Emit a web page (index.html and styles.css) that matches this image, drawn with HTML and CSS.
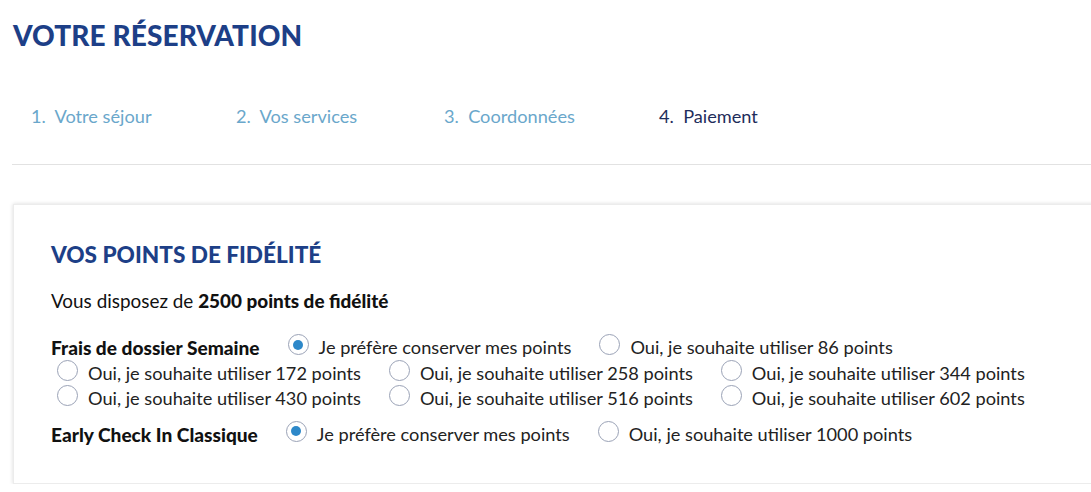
FILE: index.html
```html
<!DOCTYPE html>
<html lang="fr">
<head>
<meta charset="utf-8">
<title>Votre réservation</title>
<link rel="stylesheet" href="styles.css">
</head>
<body>
<div class="page">
  <h1 class="title">VOTRE RÉSERVATION</h1>
  <nav class="steps">
    <span class="step">1.&nbsp; Votre séjour</span>
    <span class="step">2.&nbsp; Vos services</span>
    <span class="step">3.&nbsp; Coordonnées</span>
    <span class="step current">4.&nbsp; Paiement</span>
  </nav>
  <hr class="divider">
  <section class="card">
    <h2 class="card-title">VOS POINTS DE FIDÉLITÉ</h2>
    <p class="balance">Vous disposez de <b>2500 points de fidélité</b></p>
    <div class="group">
      <span class="group-label">Frais de dossier Semaine</span>
      <label class="opt"><span class="radio checked"></span>Je préfère conserver mes points</label>
      <label class="opt"><span class="radio"></span>Oui, je souhaite utiliser 86 points</label>
      <label class="opt"><span class="radio"></span>Oui, je souhaite utiliser 172 points</label>
      <label class="opt"><span class="radio"></span>Oui, je souhaite utiliser 258 points</label>
      <label class="opt"><span class="radio"></span>Oui, je souhaite utiliser 344 points</label>
      <label class="opt"><span class="radio"></span>Oui, je souhaite utiliser 430 points</label>
      <label class="opt"><span class="radio"></span>Oui, je souhaite utiliser 516 points</label>
      <label class="opt"><span class="radio"></span>Oui, je souhaite utiliser 602 points</label>
    </div>
    <div class="group second">
      <span class="group-label">Early Check In Classique</span>
      <label class="opt"><span class="radio checked"></span>Je préfère conserver mes points</label>
      <label class="opt"><span class="radio"></span>Oui, je souhaite utiliser 1000 points</label>
    </div>
  </section>
</div>
</body>
</html>
```
FILE: styles.css
```css
html, body {
  margin: 0;
  padding: 0;
  background: #ffffff;
  overflow: hidden;
}
body {
  font-family: Lato, "Noto Sans", sans-serif;
  color: #111111;
}
.page {
  padding: 18px 0 0 12px;
  width: 1140px;
}
.title {
  margin: 0 0 0 1px;
  font-size: 28px;
  font-weight: 900;
  color: #1d3f87;
  line-height: 34px;
  letter-spacing: 0.1px;
}
.steps {
  display: flex;
  padding: 53px 0 0 19px;
  height: 59px;
}
.step {
  font-size: 18.2px;
  color: #6aa7cb;
  line-height: 22px;
}
.step:nth-child(1) { width: 205px; }
.step:nth-child(2) { width: 208px; }
.step:nth-child(3) { width: 215px; }
.step.current { color: #1e2d5b; }
.divider {
  border: 0;
  border-top: 1px solid #e2e2e2;
  margin: 0;
}
.card {
  margin: 39px 0 0 1px;
  padding: 36px 80px 36px 37px;
  box-shadow: 0 0 4px rgba(0,0,0,0.15);
  border: 1px solid #ececec;
}
.card-title {
  margin: 0;
  font-size: 22.6px;
  font-weight: 900;
  color: #1d3f87;
  line-height: 28px;
}
.balance {
  margin: 21px 0 23px;
  font-size: 18.9px;
  line-height: 22px;
}
.balance b { font-weight: 900; }
.group {
  display: flex;
  flex-wrap: wrap;
  align-items: center;
  font-size: 18.2px;
  line-height: 25.5px;
}
.group.second { margin-top: 10px; }
.group-label {
  font-weight: 900;
  font-size: 19.1px;
  margin-right: 22px;
}
.opt {
  display: inline-flex;
  align-items: center;
  margin-left: 6px;
  margin-right: 22px;
  color: #222222;
}
.radio {
  width: 21px;
  height: 21px;
  border: 1px solid #9aa2b6;
  border-radius: 50%;
  box-sizing: border-box;
  margin-right: 10px;
  position: relative;
  top: -3px;
  background: #fff;
}
.radio.checked::after {
  content: "";
  position: absolute;
  left: 4.5px;
  top: 4.5px;
  width: 10px;
  height: 10px;
  border-radius: 50%;
  background: #2d88c9;
}
```
